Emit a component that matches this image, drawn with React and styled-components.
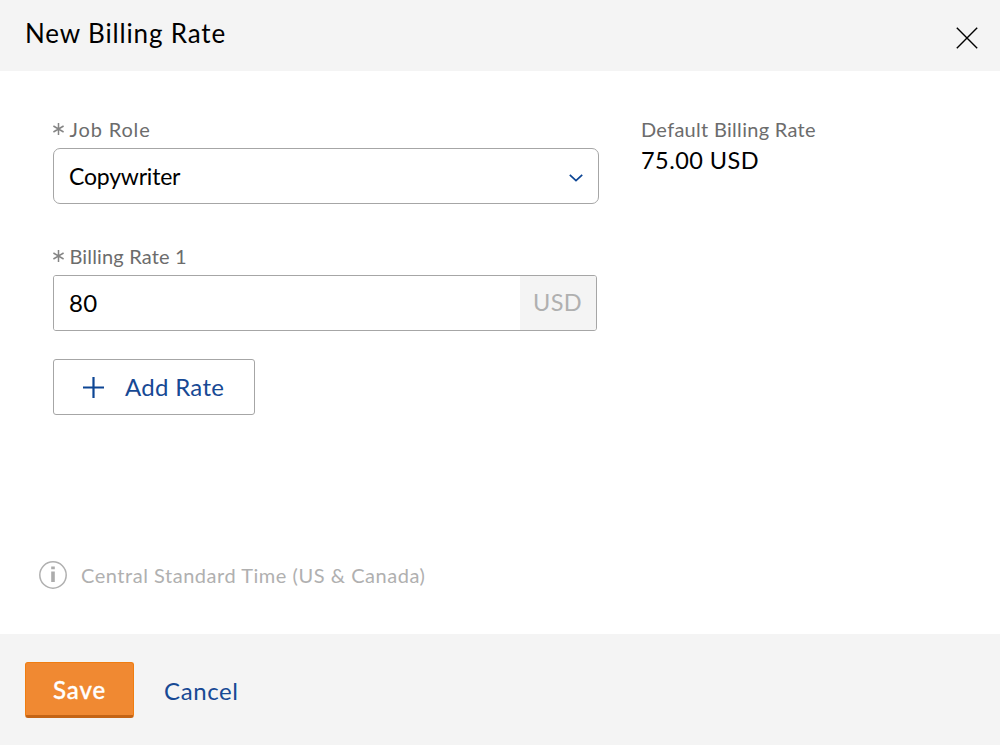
import React from "react";
import styled, { createGlobalStyle } from "styled-components";

const GlobalStyle = createGlobalStyle`
  *, *::before, *::after { box-sizing: border-box; }
  body { margin: 0; background: #fff; font-family: Lato, "Open Sans", sans-serif; color: #000; }
  button, input { font-family: inherit; }
`;

const Dialog = styled.section`
  width: 1000px;
  height: 745px;
  display: flex;
  flex-direction: column;
  background: #fff;
`;

const Header = styled.header`
  height: 71px;
  padding: 0 22px 0 25px;
  display: flex;
  justify-content: space-between;
  background: #f4f4f4;
`;

const Title = styled.h1`
  margin: 17px 0 0;
  font-size: 26px;
  line-height: 33px;
  font-weight: 400;
  letter-spacing: 0.85px;
  white-space: nowrap;
`;

const CloseButton = styled.button`
  width: 22px;
  height: 22px;
  margin-top: 27px;
  padding: 0;
  border: 0;
  background: none;
  svg { display: block; }
`;

const Body = styled.main`
  flex: 1;
  padding: 46px 53px 0;
  display: flex;
  gap: 42px;
`;

const Form = styled.form`
  width: 546px;
  display: flex;
  flex-direction: column;
`;

const Label = styled.div`
  height: 31px;
  line-height: 24px;
  font-size: 20px;
  color: #6c6c6c;
  letter-spacing: ${(p) => p.$track || "0"};
  white-space: nowrap;
  display: flex;
`;

const Required = styled.span`
  width: 16.5px;
  padding-top: 6px;
  svg { display: block; }
`;

const Select = styled.div`
  height: 56px;
  margin-bottom: 40px;
  padding: 0 15px;
  display: flex;
  align-items: center;
  justify-content: space-between;
  border: 1px solid #a6a6a6;
  border-radius: 7px;
  font-size: 23px;
  letter-spacing: -0.2px;
  svg { margin-top: 3px; }
`;

const InputGroup = styled.div`
  width: 544px;
  height: 56px;
  margin-bottom: 28px;
  display: flex;
  border: 1px solid #a6a6a6;
  border-radius: 3px;
  overflow: hidden;
`;

const Input = styled.input`
  flex: 1;
  min-width: 0;
  padding: 0 15px 2px;
  border: 0;
  outline: 0;
  font-size: 24px;
  letter-spacing: 0.4px;
  color: #000;
`;

const Unit = styled.span`
  width: 76px;
  padding-right: 1px;
  display: flex;
  justify-content: center;
  background: #f4f4f4;
  color: #b0b0b0;
  font-size: 23.5px;
  letter-spacing: 0.3px;
  line-height: 52px;
`;

const AddButton = styled.button`
  width: 202px;
  height: 56px;
  padding: 0 0 0 28.5px;
  display: flex;
  align-items: center;
  gap: 21.5px;
  border: 1px solid #a6a6a6;
  border-radius: 3px;
  background: #fff;
  color: #174994;
  font-size: 24px;
  letter-spacing: 0.3px;
  span { margin-top: -2px; }
`;

const Summary = styled.aside`
  display: flex;
  flex-direction: column;
`;

const Value = styled.div`
  margin-top: -4px;
  font-size: 23.5px;
  line-height: 32px;
  letter-spacing: 0.45px;
  white-space: nowrap;
`;

const Timezone = styled.div`
  height: 73px;
  padding-left: 39px;
  display: flex;
  gap: 14px;
  color: #b0b0b0;
  font-size: 20px;
  line-height: 29px;
  letter-spacing: 0.53px;
  white-space: nowrap;
`;

const Footer = styled.footer`
  height: 111px;
  padding: 28px 25px;
  display: flex;
  gap: 30px;
  background: #f4f4f4;
`;

const SaveButton = styled.button`
  width: 109px;
  height: 56px;
  padding: 0;
  border: 1px solid #f07d10;
  border-bottom: 3px solid #c46415;
  border-radius: 3px;
  background: #f08932;
  color: #fff;
  font-size: 24px;
  font-weight: 500;
  letter-spacing: 0.9px;
  -webkit-text-stroke: 0.35px #fff;
`;

const CancelLink = styled.button`
  height: 56px;
  padding: 1px 0 0;
  border: 0;
  background: none;
  color: #174994;
  font-size: 24px;
  letter-spacing: 0.6px;
`;

function Asterisk() {
  return (
    <Required>
      <svg width="11" height="12" viewBox="0 0 11 12" stroke="#858585" strokeWidth="1.5" fill="none">
        <path d="M5.5 0v12M.4 3l10.2 6M10.6 3L.4 9" />
      </svg>
    </Required>
  );
}

export default function App() {
  return (
    <>
      <GlobalStyle />
      <Dialog>
        <Header>
          <Title>New Billing Rate</Title>
          <CloseButton aria-label="Close">
            <svg width="22" height="22" viewBox="0 0 22 22" stroke="#000" strokeWidth="1.4">
              <path d="M.8.8l20.4 20.4M21.2.8L.8 21.2" />
            </svg>
          </CloseButton>
        </Header>
        <Body>
          <Form>
            <Label $track="0.85px"><Asterisk />Job Role</Label>
            <Select>
              Copywriter
              <svg width="14" height="8" viewBox="0 0 14 8" fill="none" stroke="#0c4594" strokeWidth="1.7">
                <path d="M.8.8L7 6.7 13.2.8" />
              </svg>
            </Select>
            <Label $track="0.15px"><Asterisk />Billing Rate 1</Label>
            <InputGroup>
              <Input aria-label="Billing Rate 1" defaultValue="80" />
              <Unit>USD</Unit>
            </InputGroup>
            <AddButton type="button">
              <svg width="21" height="21" viewBox="0 0 21 21" stroke="#0c4594" strokeWidth="2.2">
                <path d="M10.5 0v21M0 10.5h21" />
              </svg>
              <span>Add Rate</span>
            </AddButton>
          </Form>
          <Summary>
            <Label $track="0.3px">Default Billing Rate</Label>
            <Value>75.00 USD</Value>
          </Summary>
        </Body>
        <Timezone>
          <svg width="28" height="28" viewBox="0 0 28 28" fill="none">
            <circle cx="14" cy="14" r="13.2" stroke="#b0b0b0" strokeWidth="1.5" />
            <path d="M12.2 5.5h3.6v2.8h-3.6zM12.2 10.5h3.6V21h-3.6z" fill="#acacac" />
          </svg>
          Central Standard Time (US &amp; Canada)
        </Timezone>
        <Footer>
          <SaveButton>Save</SaveButton>
          <CancelLink>Cancel</CancelLink>
        </Footer>
      </Dialog>
    </>
  );
}
